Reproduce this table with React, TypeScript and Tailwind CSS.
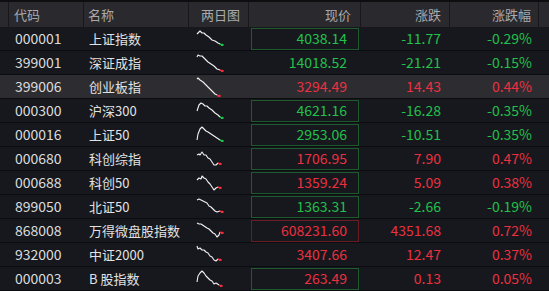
import React from 'react';

type Row = {
  code: string;
  name: string;
  price: string;
  change: string;
  pct: string;
  up: boolean;
  box?: 'green' | 'red';
  selected?: boolean;
  line: [number, number][];
  tip: 'green' | 'red';
};

const rows: Row[] = [
  { code: '000001', name: '上证指数', price: '4038.14', change: '-11.77', pct: '-0.29%', up: false, box: 'green', tip: 'green',
    line: [[1, 6], [4, 3], [6, 5], [8, 5], [10, 7], [13, 9], [16, 12], [19, 13], [22, 15], [24, 16]] },
  { code: '399001', name: '深证成指', price: '14018.52', change: '-21.21', pct: '-0.15%', up: false, tip: 'red',
    line: [[1, 5], [2, 3], [4, 4], [6, 4], [9, 7], [12, 10], [15, 12], [18, 14], [21, 17], [24, 18]] },
  { code: '399006', name: '创业板指', price: '3294.49', change: '14.43', pct: '0.44%', up: true, selected: true, tip: 'red',
    line: [[1, 3], [2, 2], [4, 4], [7, 6], [10, 9], [13, 12], [16, 15], [19, 18], [21, 19]] },
  { code: '000300', name: '沪深300', price: '4621.16', change: '-16.28', pct: '-0.35%', up: false, box: 'green', tip: 'green',
    line: [[1, 11], [3, 5], [5, 3], [7, 4], [9, 6], [11, 6], [13, 8], [16, 10], [19, 13], [22, 15], [24, 17]] },
  { code: '000016', name: '上证50', price: '2953.06', change: '-10.51', pct: '-0.35%', up: false, box: 'green', tip: 'green',
    line: [[1, 16], [2, 10], [4, 5], [6, 3], [8, 5], [10, 7], [12, 8], [15, 10], [18, 12], [21, 14], [24, 16]] },
  { code: '000680', name: '科创综指', price: '1706.95', change: '7.90', pct: '0.47%', up: true, box: 'green', tip: 'red',
    line: [[1, 7], [3, 6], [4, 7], [6, 4], [8, 7], [10, 7], [12, 10], [14, 11], [16, 14], [18, 17], [20, 17], [22, 15]] },
  { code: '000688', name: '科创50', price: '1359.24', change: '5.09', pct: '0.38%', up: true, box: 'green', tip: 'red',
    line: [[1, 8], [3, 6], [5, 7], [6, 4], [8, 6], [10, 7], [12, 10], [14, 12], [16, 15], [18, 18], [20, 16], [22, 15]] },
  { code: '899050', name: '北证50', price: '1363.31', change: '-2.66', pct: '-0.19%', up: false, box: 'green', tip: 'red',
    line: [[1, 4], [3, 3], [5, 4], [7, 5], [9, 6], [11, 7], [13, 10], [15, 11], [17, 13], [19, 15], [21, 16], [24, 15]] },
  { code: '868008', name: '万得微盘股指数', price: '608231.60', change: '4351.68', pct: '0.72%', up: true, box: 'red', tip: 'red',
    line: [[1, 3], [3, 4], [5, 4], [8, 6], [11, 8], [13, 9], [15, 11], [17, 13], [19, 14], [21, 17], [23, 15], [24, 12]] },
  { code: '932000', name: '中证2000', price: '3407.66', change: '12.47', pct: '0.37%', up: true, tip: 'red',
    line: [[1, 2], [2, 5], [4, 4], [6, 6], [8, 6], [10, 8], [12, 9], [14, 12], [16, 13], [18, 16], [20, 17], [22, 15]] },
  { code: '000003', name: 'B 股指数', price: '263.49', change: '0.13', pct: '0.05%', up: true, box: 'green', tip: 'red',
    line: [[1, 14], [2, 8], [4, 5], [6, 3], [8, 5], [10, 8], [12, 10], [14, 12], [16, 13], [18, 16], [20, 15], [23, 17]] },
];

const Spark = ({ line, tip }: { line: [number, number][]; tip: 'green' | 'red' }) => {
  const last = line[line.length - 1];
  const tipColor = tip === 'green' ? '#1fc34a' : '#ef2f3b';
  return (
    <svg width="32" height="21" viewBox="0 0 32 21" className="block">
      <polyline
        points={line.map(([x, y]) => `${x},${y}`).join(' ')}
        fill="none"
        stroke="#f2f2f2"
        strokeWidth="1.1"
        strokeLinejoin="round"
      />
      <polyline
        points={`${last[0]},${last[1]} ${last[0] + 2},${last[1] + 1} ${last[0] + 3},${last[1]}`}
        fill="none"
        stroke={tipColor}
        strokeWidth="1.4"
      />
      <rect x={last[0] + 1} y={last[1]} width="2.5" height="2" fill={tipColor} />
    </svg>
  );
};

const cell = 'h-full flex items-center';

export default function App() {
  return (
    <div
      className="w-[549px] h-[291px] overflow-hidden bg-[#16181d] text-[#dcdcdc]"
      style={{ fontFamily: '"Noto Sans CJK SC", "Noto Sans", sans-serif' }}
    >
      <div className="flex h-[27px] border-t-2 border-[#0e0e10] bg-[#2a2a2e] text-[13px] text-[#a9a9ab]">
        <div className="w-[9px] border-r border-[#18181b]" />
        <div className="w-[75px] flex items-center pl-[5px] border-r border-[#18181b]">代码</div>
        <div className="w-[105px] flex items-center pl-[4px] border-r border-[#18181b]">名称</div>
        <div className="w-[60px] flex items-center justify-end pr-[8px] border-r border-[#18181b]">两日图</div>
        <div className="w-[112px] flex items-center justify-end pr-[9px] border-r border-[#18181b]">现价</div>
        <div className="w-[89px] flex items-center justify-end pr-[8px] border-r border-[#18181b]">涨跌</div>
        <div className="w-[89px] flex items-center justify-end pr-[7px] border-r border-[#18181b]">涨跌幅</div>
        <div className="flex-1" />
      </div>
      {rows.map((r) => {
        const color = r.up ? 'text-[#ec3040]' : 'text-[#22c04c]';
        const boxBorder =
          r.box === 'green' ? 'border-[#1e5a2d]' : r.box === 'red' ? 'border-[#6a1c22]' : 'border-transparent';
        return (
          <div
            key={r.code}
            className={`flex h-[24px] border-b border-[#0b0c0f] ${r.selected ? 'bg-[#2d2d31]' : ''}`}
          >
            <div className="w-[9px]" />
            <div className={`${cell} w-[75px] pl-[6px] text-[14px]`}>{r.code}</div>
            <div className={`${cell} w-[105px] pl-[5px] text-[13px] text-[#e2e2e2]`}>{r.name}</div>
            <div className={`${cell} w-[60px] pl-[7px]`}>
              <Spark line={r.line} tip={r.tip} />
            </div>
            <div className={`${cell} w-[112px] pl-[2px]`}>
              <div
                className={`w-[108px] h-[22px] border ${boxBorder} flex items-center justify-end pr-[11px] text-[14px] ${color}`}
              >
                {r.price}
              </div>
            </div>
            <div className={`${cell} w-[89px] justify-end pr-[9px] text-[14px] ${color}`}>{r.change}</div>
            <div className={`${cell} w-[89px] justify-end pr-[7px] text-[14px] ${color}`}>{r.pct}</div>
            <div className="flex-1" />
          </div>
        );
      })}
    </div>
  );
}
